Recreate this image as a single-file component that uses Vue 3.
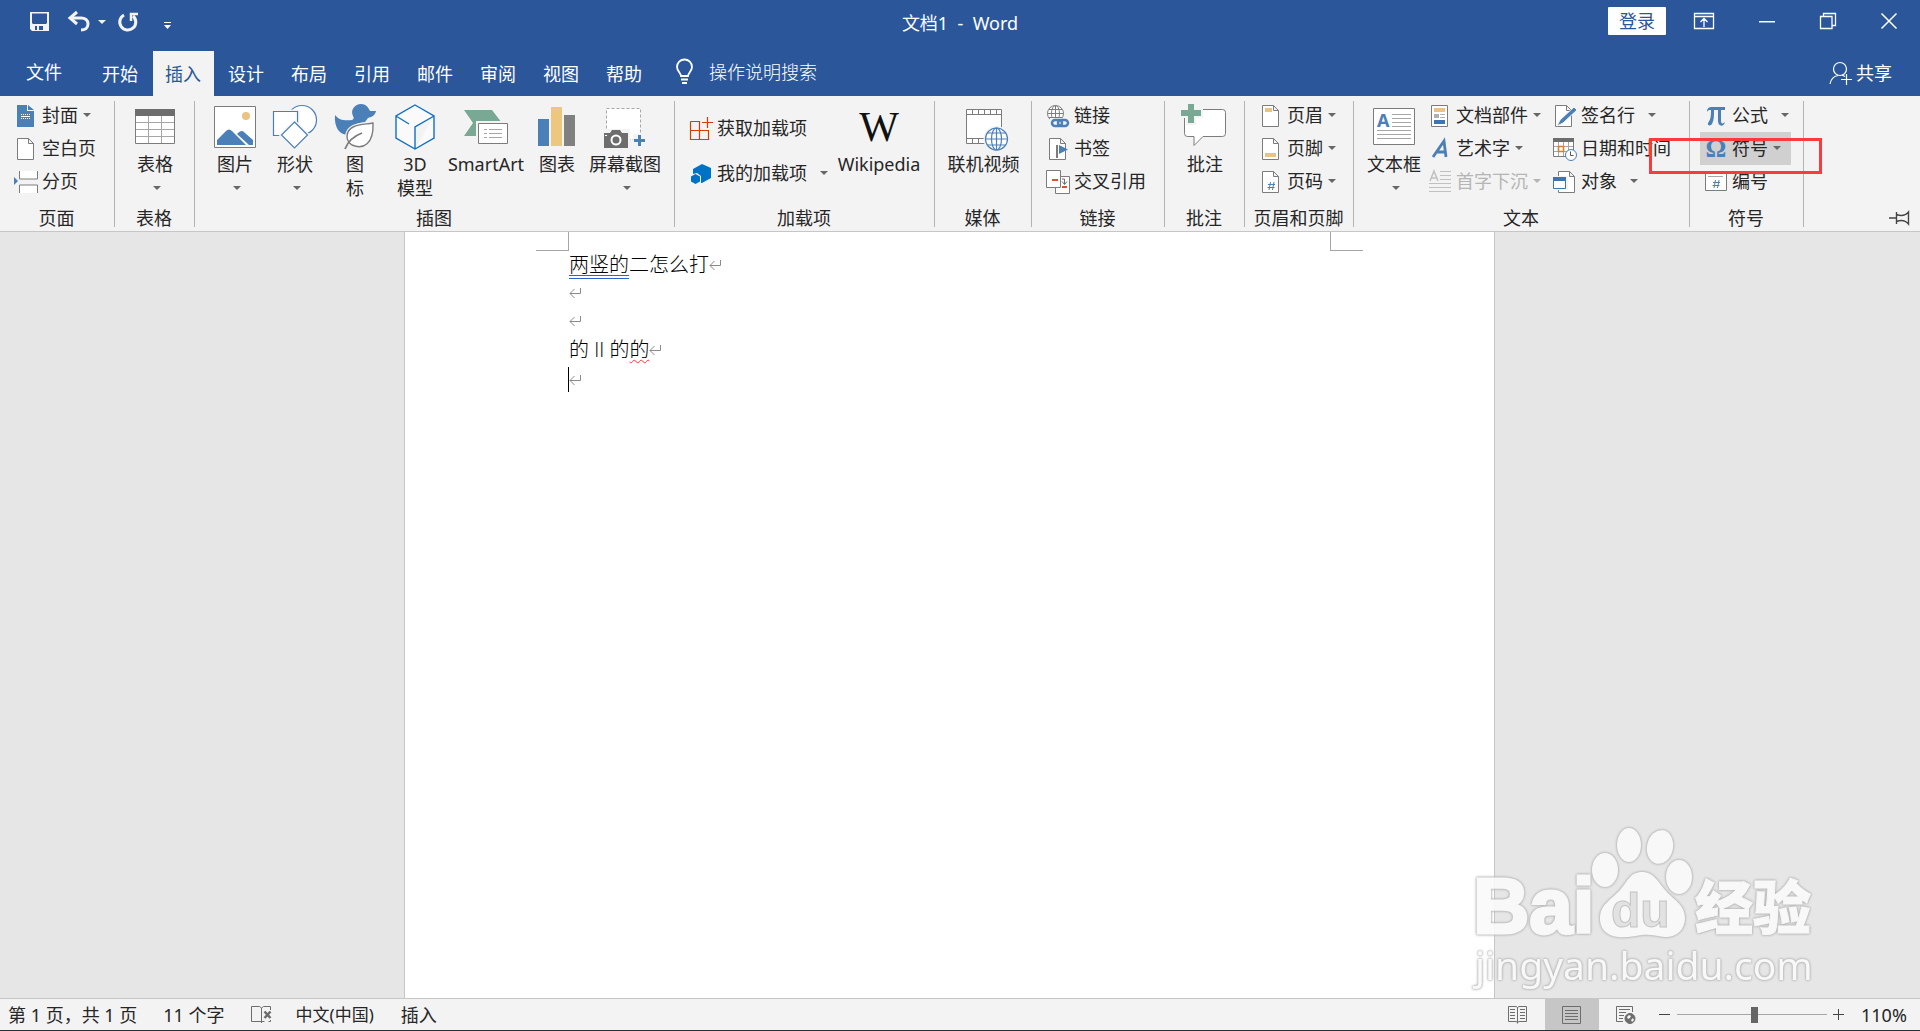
<script setup>
import { ref } from 'vue'

const tabs = ['开始', '插入', '设计', '布局', '引用', '邮件', '审阅', '视图', '帮助']
const activeTab = ref('插入')
const zoom = ref(52)
</script>

<template>
  <div class="word">
    <header class="top">
      <div class="title_bar">
        <div class="quick">
          <button aria-label="保存" class="q_save">
            <svg width="20" height="20" viewBox="0 0 20 20">
              <path fill="#f3f3f3" fill-rule="evenodd" d="M0 0h19v19H2l-2-2zM2 1.500v9.500l1 1h13l1-1v-9.500zM5 14v4h2v-4zM9 14v4h4v-4z" />
            </svg>
          </button>
          <button aria-label="撤消" class="q_undo">
            <svg width="22" height="20" viewBox="0 0 22 20" fill="none" stroke="#f3f3f3" stroke-width="3">
              <path d="M3 6h10c4 0 7 2 7 6s-3 6-7 6" />
              <path d="M9 0L2 6l7 6" />
            </svg>
          </button>
          <i class="caret light"></i>
          <button aria-label="重复" class="q_redo">
            <svg width="20" height="20" viewBox="0 0 20 20" fill="none" stroke="#f3f3f3" stroke-width="3">
              <path d="M6 3a8 8 0 1 0 9 1" />
              <path d="M13 9V2h7" stroke-width="2.500" />
            </svg>
          </button>
          <button aria-label="自定义" class="q_more">
            <svg width="8" height="8" viewBox="0 0 8 8" fill="#fff"><path d="M0 0h7v1H0zM0 3h7L3.500 7z" /></svg>
          </button>
        </div>
        <h1>文档1&nbsp; -&nbsp; Word</h1>
        <div class="window_tools">
          <button class="login">登录</button>
          <button aria-label="功能区显示选项">
            <svg width="20" height="16" viewBox="0 0 20 16" fill="none" stroke="#fff">
              <path d="M.5.5h19v15H.5zM.5 3.500h19M10 14V6M6.500 9L10 5.500 13.500 9" stroke-width="1.300" />
            </svg>
          </button>
          <button aria-label="最小化">
            <svg width="16" height="16" viewBox="0 0 16 16"><path d="M0 8h16v1.500H0z" fill="#fff" /></svg>
          </button>
          <button aria-label="还原">
            <svg width="16" height="16" viewBox="0 0 16 16" fill="none" stroke="#fff" stroke-width="1.300">
              <path d="M.5 3.500h11.500v12H.5zM3.500 3V.5h12v12H12" />
            </svg>
          </button>
          <button aria-label="关闭">
            <svg width="16" height="16" viewBox="0 0 16 16" stroke="#fff" stroke-width="1.500"><path d="M.5.5l15 15M15.500.5l-15 15" /></svg>
          </button>
        </div>
      </div>
      <nav class="tabs">
        <button class="tab file">文件</button>
        <button v-for="tab in tabs" :key="tab" class="tab" :class="{ active: tab === activeTab }" @click="activeTab = tab">
          {{ tab }}
        </button>
        <button class="tell">
          <svg width="20" height="26" viewBox="0 0 20 26" fill="none" stroke="#fff" stroke-width="1.800">
            <path d="M6 17c0-3-4-5-4-9a7.500 7.500 0 0 1 15 0c0 4-4 6-4 9zM6 20.500h7M7 24h5" />
          </svg>
          操作说明搜索
        </button>
        <button class="share">
          <svg width="24" height="24" viewBox="0 0 24 24" fill="none" stroke="#fff" stroke-width="1.200">
            <circle cx="11" cy="8" r="6.500" />
            <path d="M1 23c1-5 4-8 8-8.500M13 14l3 1.500M17.500 13v11M12 18.500h11" />
          </svg>
          共享
        </button>
      </nav>
    </header>

    <section class="ribbon">
      <div class="group g_page">
        <div class="body">
          <div class="rows">
            <button class="small">
              <svg viewBox="0 0 24 24">
                <path d="M3 1h10v6h7v16H3z" fill="#4a7fb8" />
                <path d="M14 1l6 5h-6z" fill="#4a7fb8" />
                <path d="M7 10.500h9M7 14.500h9" stroke="#fff" stroke-dasharray="1 1" />
                <path d="M7 12.500h9" stroke="#fff" />
              </svg>
              封面<i class="caret"></i>
            </button>
            <button class="small">
              <svg viewBox="0 0 24 24"><path class="sheet" d="M3.500 1.500h11l5 5v16h-16zM14.500 1.500v5h5" /></svg>
              空白页
            </button>
            <button class="small">
              <svg viewBox="0 0 24 24">
                <path class="sheet" d="M5.500 1v8h18V1M5.500 23v-8h18v8" />
                <path d="M0 7l4 4-4 4z" fill="#4a7fb8" />
              </svg>
              分页
            </button>
          </div>
        </div>
        <div class="caption">页面</div>
      </div>

      <div class="group g_table">
        <div class="body center">
          <button class="big">
            <svg viewBox="0 0 48 48">
              <path class="sheet" d="M4.500 5.500h39v34h-39z" />
              <path d="M5 18.500h38M5 25.500h38M5 32.500h38M17.500 12v27M30.500 12v27" stroke="#a6a6a6" />
              <path d="M4 5h40v7H4z" fill="#6d6d6d" />
            </svg>
            表格<i class="caret"></i>
          </button>
        </div>
        <div class="caption">表格</div>
      </div>

      <div class="group g_art">
        <div class="body">
          <button class="big">
            <svg viewBox="0 0 48 48">
              <path class="sheet" d="M3.500 2.500h41v41h-41z" />
              <circle cx="35" cy="12" r="4" fill="#eac282" />
              <path d="M6 41v-5l9-9q3-3 6 0l14 14zM27 29q4-4 7 0l8 7v5h-4L26 30z" fill="#4a7fb8" />
            </svg>
            图片<i class="caret"></i>
          </button>
          <button class="big">
            <svg viewBox="0 0 48 48" fill="#fff" stroke="#4a7fb8" stroke-width="1.200">
              <circle cx="31" cy="16" r="14.500" />
              <path d="M2.500 7.500h24v24h-24z" stroke="#f3f3f3" stroke-width="4" />
              <path d="M2.500 7.500h24v24h-24z" />
              <path d="M23.500 18l13 13-13 13-13-13z" stroke="#f3f3f3" stroke-width="4" />
              <path d="M23.500 18l13 13-13 13-13-13z" />
            </svg>
            形状<i class="caret"></i>
          </button>
          <button class="big">
            <svg viewBox="0 0 48 48">
              <path d="M4 11c4 5 9 6 17 5 2-1 2-2 1-4C19 6 24 0 30 0c5 0 7 3 9 7h6c-1 5-5 6-8 7l-3 4c-8 1-17 4-18 13-8-1-13-8-12-20z" fill="#4a7fb8" />
              <path d="M42 19c-11 2-25 1-26 13 0 4 2 7 5 9 11 5 22-1 21-22z" fill="#fff" stroke="#f3f3f3" stroke-width="4" />
              <path d="M42 19c-11 2-25 1-26 13 0 4 2 7 5 9 11 5 22-1 21-22z" fill="#fff" stroke="#7c7c7c" stroke-width="1.400" />
              <path d="M14 45c3-8 9-13 17-16" fill="none" stroke="#7c7c7c" stroke-width="1.800" />
            </svg>
            图<br />标
          </button>
          <button class="big">
            <svg viewBox="0 0 48 48" stroke="#1070c4" stroke-width="1.400" fill="#fafafa">
              <path d="M24 1l19 11v22L24 45 5 34V12zM5 12l13 8M43 12L24 23v22" />
            </svg>
            3D<br />模型
          </button>
          <button class="big smart">
            <svg viewBox="0 0 48 48">
              <path d="M2 6h28l10 13-9 13H2l9-13z" fill="#79a894" />
              <path d="M14 17h34v25H14z" fill="#f3f3f3" />
              <path class="sheet" d="M16.500 19.500h29v20h-29z" />
              <path d="M22 25.500h3m2 0h13M22 29.500h3m2 0h13M22 33.500h3m2 0h13" stroke="#a6a6a6" />
            </svg>
            SmartArt
          </button>
          <button class="big">
            <svg viewBox="0 0 48 48">
              <path d="M5 15h11v27H5z" fill="#4a7fb8" />
              <path d="M18 3h11v39H18z" fill="#eec77f" />
              <path d="M31 11h11v31H31z" fill="#808080" />
            </svg>
            图表
          </button>
          <button class="big shot">
            <svg viewBox="0 0 48 48">
              <path d="M5.500 4.500h34v31h-34z" fill="#fff" stroke="#a6a6a6" stroke-dasharray="3 2" />
              <path d="M2 25h27v20H2z" fill="#f3f3f3" />
              <path d="M3 29h6l2-3h8l2 3h6v15H3z" fill="#6d6d6d" />
              <circle cx="15" cy="36" r="4.500" fill="none" stroke="#fff" stroke-width="2" />
              <path d="M4 31h2v1H4z" fill="#fff" />
              <path d="M32 30h13v13H32z" fill="#f3f3f3" />
              <path d="M33 36.500h11M38.500 31v11" stroke="#4a7fb8" stroke-width="3" />
            </svg>
            屏幕截图<i class="caret"></i>
          </button>
        </div>
        <div class="caption">插图</div>
      </div>

      <div class="group g_addins">
        <div class="body">
          <div class="rows wide">
            <button class="small">
              <svg viewBox="0 0 24 24" fill="none" stroke="#d83b01" stroke-width="1.200">
                <path d="M1.500 4.500h9v18M1.500 4.500v18h18v-9h-18M18.500 0v11M13 5.500h11" />
              </svg>
              获取加载项
            </button>
            <button class="small">
              <svg viewBox="0 0 24 24" fill="#0072c6">
                <path d="M13 2l9 4v10l-9 5h-1v-7l-4-3-4 1V7z" />
                <path d="M6.500 12l4.500 2.500v5L6.500 22 2 19.500v-5z" />
              </svg>
              我的加载项<i class="caret far"></i>
            </button>
          </div>
          <button class="big wiki">
            <svg viewBox="0 0 48 48"><text x="24" y="37" text-anchor="middle" class="serif_w">W</text></svg>
            Wikipedia
          </button>
        </div>
        <div class="caption">加载项</div>
      </div>

      <div class="group g_media">
        <div class="body center">
          <button class="big">
            <svg viewBox="0 0 48 48">
              <path class="sheet" d="M6.500 5.500h35v34h-35z" />
              <path d="M6.500 10.500h35M6.500 34.500h20M12.500 5v5M18.500 5v5M24.500 5v5M30.500 5v5M36.500 5v5M12.500 35v5M18.500 35v5M24.500 35v5" stroke="#7c7c7c" />
              <circle cx="36.500" cy="35" r="13" fill="#f3f3f3" />
              <g fill="#fff" stroke="#4a7fb8" stroke-width="1.200">
                <circle cx="36.500" cy="35" r="11" />
                <ellipse cx="36.500" cy="35" rx="5" ry="11" />
                <path d="M36.500 24v22M25.500 35h22M28 29h17M28 41h17" />
              </g>
            </svg>
            联机视频
          </button>
        </div>
        <div class="caption">媒体</div>
      </div>

      <div class="group g_links">
        <div class="body">
          <div class="rows">
            <button class="small">
              <svg viewBox="0 0 24 24" fill="none">
                <g stroke="#7c7c7c" fill="#fff">
                  <circle cx="9.500" cy="9.500" r="8" />
                  <ellipse cx="9.500" cy="9.500" rx="4" ry="8" />
                  <path d="M9.500 1.500v16M1.500 9.500h16M3 5.500h13M3 13.500h13" />
                </g>
                <path d="M4 14h19v10H4z" fill="#f3f3f3" />
                <g stroke="#4a7fb8" stroke-width="2.500">
                  <rect x="6" y="16" width="10" height="6" rx="3" />
                  <rect x="12" y="16" width="10" height="6" rx="3" />
                </g>
              </svg>
              链接
            </button>
            <button class="small">
              <svg viewBox="0 0 24 24">
                <path class="sheet" d="M3.500 1.500h11l5 5v16h-16zM14.500 1.500v5h5" />
                <path d="M10 8h2v13h-2z" fill="#7c7c7c" />
                <path d="M13 8l9 4.500-9 4.500z" fill="#4a7fb8" />
              </svg>
              书签
            </button>
            <button class="small">
              <svg viewBox="0 0 24 24">
                <path class="sheet" d="M9.500 6.500h14v17h-14z" />
                <path class="sheet" d="M.5.500h14v17H.5z" />
                <path d="M6 10h6M16 17h5" stroke="#d9532c" stroke-width="2" />
                <path d="M16 9h2.500v5M16 11.500l2.500 3 2.500-3" fill="none" stroke="#6d6d6d" />
              </svg>
              交叉引用
            </button>
          </div>
        </div>
        <div class="caption">链接</div>
      </div>

      <div class="group g_note">
        <div class="body center">
          <button class="big">
            <svg viewBox="0 0 48 48">
              <path class="sheet" d="M6.500 5.500h35q3 0 3 3v21q0 3-3 3H22l-9 9v-9H6.500q-3 0-3-3v-21q0-3 3-3z" />
              <path d="M5 0h10v4h7v10h-7v7H5v-7H0V4h5z" fill="#f3f3f3" />
              <path d="M7 0h6v6h7v6h-7v7H7v-7H0V6h7z" fill="#79a894" />
            </svg>
            批注
          </button>
        </div>
        <div class="caption">批注</div>
      </div>

      <div class="group g_head">
        <div class="body">
          <div class="rows">
            <button class="small">
              <svg viewBox="0 0 24 24">
                <path class="sheet" d="M3.500 1.500h11l5 5v16h-16zM14.500 1.500v5h5" />
                <path d="M6 4h7v4H6z" fill="#eac282" />
              </svg>
              页眉<i class="caret"></i>
            </button>
            <button class="small">
              <svg viewBox="0 0 24 24">
                <path class="sheet" d="M3.500 1.500h11l5 5v16h-16zM14.500 1.500v5h5" />
                <path d="M6 16h11v4H6z" fill="#eac282" />
              </svg>
              页脚<i class="caret"></i>
            </button>
            <button class="small">
              <svg viewBox="0 0 24 24">
                <path class="sheet" d="M3.500 1.500h11l5 5v16h-16zM14.500 1.500v5h5" />
                <path d="M10 20l1.500-8M13.500 20l1.500-8M9 14.500h7M8.500 17.500h7" stroke="#4a7fb8" />
              </svg>
              页码<i class="caret"></i>
            </button>
          </div>
        </div>
        <div class="caption">页眉和页脚</div>
      </div>

      <div class="group g_text">
        <div class="body">
          <button class="big">
            <svg viewBox="0 0 48 48">
              <path class="sheet" d="M3.500 4.500h41v36h-41z" />
              <text x="7" y="23" class="letter">A</text>
              <path d="M22 10.500h19M22 14.500h19M22 18.500h19M22 22.500h19M7 26.500h34M7 30.500h34M7 34.500h34" stroke="#a6a6a6" />
            </svg>
            文本框<i class="caret"></i>
          </button>
          <div class="rows">
            <button class="small">
              <svg viewBox="0 0 24 24">
                <path class="sheet" d="M3.500 1.500h16v21h-16z" />
                <path d="M6 4h11v4H6z" fill="#eac282" />
                <path d="M6 10h5v4H6zM12 10h5v1h-5zM12 13h5v1h-5z" fill="#b0b0b0" />
                <path d="M6 16h11v4H6z" fill="#3d75b0" />
              </svg>
              文档部件<i class="caret"></i>
            </button>
            <button class="small">
              <svg viewBox="0 0 24 24">
                <path d="M5 20L16 4l2 16M8 15h9" fill="none" stroke="#4a7fb8" stroke-width="2.800" />
              </svg>
              艺术字<i class="caret"></i>
            </button>
            <button class="small" disabled>
              <svg viewBox="0 0 24 24" stroke="#c0c0c0" fill="none">
                <path d="M2 11L6 1l4 10M3.500 8h5" stroke-width="1.500" />
                <path d="M12 1.500h11M12 5.500h11M12 9.500h11M1 13.500h22M1 17.500h22M1 21.500h22" />
              </svg>
              首字下沉<i class="caret"></i>
            </button>
          </div>
          <div class="rows second">
            <button class="small">
              <svg viewBox="0 0 24 24">
                <path class="sheet" d="M2.500 1.500h11l5 5v16h-16zM13.500 1.500v5h5" />
                <path d="M21 3l3 3L10 19l-6 3 3-6z" fill="#4a7fb8" stroke="#f3f3f3" />
              </svg>
              签名行<i class="caret far"></i>
            </button>
            <button class="small">
              <svg viewBox="0 0 24 24">
                <path class="sheet" d="M.5 1.500h20v18H.5z" />
                <path d="M5.500 5v14M10.500 5v14M15.500 5v14M1 9.500h19M1 14.500h19" stroke="#a6a6a6" />
                <path d="M0 1h21v4H0z" fill="#6d6d6d" />
                <path d="M5.500 9.500h5v5h-5z" fill="#fff" stroke="#e07b28" stroke-width="1.600" />
                <circle cx="18" cy="18" r="5.500" fill="#fff" stroke="#4a7fb8" />
                <path d="M17.500 14.500v4h3" fill="none" stroke="#555" />
              </svg>
              日期和时间
            </button>
            <button class="small">
              <svg viewBox="0 0 24 24">
                <path class="sheet" d="M5.500 1.500h11l5 5v16h-16zM16.500 1.500v5h5" />
                <path d="M-1 6h16v14H-1z" fill="#f3f3f3" />
                <path d="M.5 7.500h12v11H.5z" fill="#fff" stroke="#3d75b0" />
                <path d="M0 7h13v4H0z" fill="#3d75b0" />
              </svg>
              对象<i class="caret far"></i>
            </button>
          </div>
        </div>
        <div class="caption">文本</div>
      </div>

      <div class="group g_symbol">
        <div class="body">
          <div class="rows">
            <button class="small">
              <svg viewBox="0 0 24 24">
                <path d="M3 8c0-4 2-5 5-5h13v3h-4v11c0 3 2 3 4 1-1 5-7 5-7-1V6h-4c0 6 0 10-2 14-1 2-5 2-4-1 3-4 3-8 3-13-2 0-3 0-4 2z" fill="#4a7fb8" />
              </svg>
              公式<i class="caret far"></i>
            </button>
            <button class="small pressed">
              <svg viewBox="0 0 24 24">
                <text x="12" y="20" text-anchor="middle" class="omega">Ω</text>
              </svg>
              符号<i class="caret"></i>
            </button>
            <button class="small">
              <svg viewBox="0 0 24 24">
                <path class="sheet" d="M1.500 2.500h21v18h-21z" />
                <path d="M4 6.500h15" stroke="#a6a6a6" />
                <path d="M10 18l1.500-8M13.500 18l1.500-8M9 12.500h7M8.500 15.500h7" stroke="#4a7fb8" />
              </svg>
              编号
            </button>
          </div>
        </div>
        <div class="caption">符号</div>
        <div class="mark"></div>
      </div>

      <button class="pin" aria-label="固定功能区">
        <svg width="22" height="14" viewBox="0 0 22 14" fill="none" stroke="#444" stroke-width="1.400">
          <path d="M0 7h7M7.500 1v12M7.500 3.500c5 2 9 1 12-2.500v12c-3-3.500-7-4.500-12-2.500" />
        </svg>
      </button>
    </section>

    <main class="workspace">
      <article class="page">
        <i class="corner left"></i>
        <i class="corner right"></i>
        <p><span class="grammar">两竖的</span>二怎么打<svg class="ret" viewBox="0 0 12 12"><path d="M11.500 1v5.500H1M5.500 2L1 6.500 5.500 11" /></svg></p>
        <p><svg class="ret" viewBox="0 0 12 12"><path d="M11.500 1v5.500H1M5.500 2L1 6.500 5.500 11" /></svg></p>
        <p><svg class="ret" viewBox="0 0 12 12"><path d="M11.500 1v5.500H1M5.500 2L1 6.500 5.500 11" /></svg></p>
        <p class="mixed">的 II 的<span class="spelling">的</span><svg class="ret" viewBox="0 0 12 12"><path d="M11.500 1v5.500H1M5.500 2L1 6.500 5.500 11" /></svg></p>
        <p class="current"><svg class="ret" viewBox="0 0 12 12"><path d="M11.500 1v5.500H1M5.500 2L1 6.500 5.500 11" /></svg></p>
      </article>

      <svg class="watermark" width="360" height="176" viewBox="0 0 360 176">
        <text x="9" y="112" class="wm_logo">Bai</text>
        <ellipse cx="141" cy="49" rx="13" ry="17" />
        <ellipse cx="165" cy="24" rx="12" ry="17" />
        <ellipse cx="196" cy="26" rx="13" ry="17" transform="rotate(12 196 26)" />
        <ellipse cx="215" cy="56" rx="13" ry="17" />
        <path d="M178 51c12 0 16 10 24 19s19 14 19 27c0 13-10 20-21 19-8-1-14-3-22-2-9 1-14 3-24 2-12-1-19-9-18-21 1-12 12-17 20-26s10-18 22-18z" />
        <text x="147" y="106" class="wm_du">du</text>
        <text x="231" y="108" class="wm_cn">经验</text>
        <text x="11" y="159" class="wm_url">jingyan.baidu.com</text>
      </svg>
    </main>

    <footer class="status">
      <span class="s_page">第 1 页，共 1 页</span>
      <span class="s_words">11 个字</span>
      <svg class="s_book" width="22" height="18" viewBox="0 0 22 18" fill="none" stroke="#6d6d6d">
        <path d="M10.500 17v-1.500H.5V.5h8l2 1.500 2-1.500h7V4M10.500 2v13.500h3m4 0h2V14" />
        <path d="M13.500 5.500l6 6.500M19.500 5.500l-6 6.500" stroke-width="2.500" />
      </svg>
      <span class="s_lang">中文(中国)</span>
      <span class="s_mode">插入</span>

      <div class="views">
        <button aria-label="阅读视图">
          <svg width="20" height="18" viewBox="0 0 20 18" fill="none" stroke="#6d6d6d">
            <path d="M9.500 1.500L8 .5H.5v15H8l1.500 1 1.500-1h7.500V.5H11zv16" />
            <path d="M2 3.500h5M2 6.500h5M2 9.500h5M2 12.500h5M12 3.500h5M12 6.500h5M12 9.500h5M12 12.500h5" />
          </svg>
        </button>
        <button class="on" aria-label="页面视图">
          <svg width="20" height="18" viewBox="0 0 20 18" fill="none" stroke="#6d6d6d">
            <path d="M.5.500h18v17H.5zM3 4.500h13M3 7.500h13M3 10.500h13M3 13.500h13" />
          </svg>
        </button>
        <button aria-label="Web 版式视图">
          <svg width="20" height="18" viewBox="0 0 20 18" fill="none" stroke="#6d6d6d">
            <path d="M7 15.500H.5V.5h16V6M3 3.500h11M3 6.500h7M3 9.500h5M3 12.500h4" />
            <circle cx="14" cy="12.500" r="5" fill="#6d6d6d" />
            <path d="M11 11l2-2 2 1-1 2-2 1zM15 14l2-2 1 2-2 2z" fill="#f3f3f3" stroke="none" />
          </svg>
        </button>
      </div>
      <button class="step" aria-label="缩小">
        <svg width="12" height="12" viewBox="0 0 12 12"><path d="M0 5.500h11" stroke="#444" /></svg>
      </button>
      <input v-model="zoom" type="range" min="0" max="100" aria-label="显示比例" />
      <button class="step" aria-label="放大">
        <svg width="12" height="12" viewBox="0 0 12 12"><path d="M0 5.500h11M5.500 0v11" stroke="#444" /></svg>
      </button>
      <span class="s_zoom">110%</span>
    </footer>
  </div>
</template>

<style>
body {
  margin: 0;
}
</style>

<style scoped>
.word {
  display: flex;
  flex-direction: column;
  min-height: 100vh;
  font-family: 'Noto Sans', 'Noto Sans CJK SC', sans-serif;
  font-size: 18px;
  line-height: 24px;
  color: #262626;
  background: #e6e6e6;
}

button {
  padding: 0;
  border: none;
  background: none;
  font: inherit;
  color: inherit;
  white-space: nowrap;
}

svg {
  display: block;
  flex: none;
  overflow: visible;
}

.caret {
  width: 0;
  border: 4px solid transparent;
  border-top-color: #666;
  border-bottom: none;
  margin-left: 5px;
}

.caret.far {
  margin-left: 13px;
}

.caret.light {
  border-top-color: #f3f3f3;
}

/* title and tabs */
.top {
  background: #2b579a;
  color: #fff;
}

.title_bar {
  display: grid;
  grid-template-columns: 1fr auto 1fr;
  height: 51px;
}

.quick {
  display: flex;
  align-items: center;
  height: 44px;
  padding-left: 30px;
}

.q_undo {
  margin-left: 18px;
}

.quick .caret {
  margin-left: 8px;
}

.q_redo {
  margin-left: 12px;
}

.q_more {
  margin: 8px 0 0 26px;
}

h1 {
  margin: 0;
  font-size: 18px;
  font-weight: 400;
  line-height: 46px;
}

.window_tools {
  display: flex;
  align-items: center;
  justify-content: flex-end;
  height: 42px;
  gap: 45px;
  padding-right: 23px;
}

.login {
  width: 58px;
  height: 28px;
  margin-right: -17px;
  border-radius: 1px;
  background: #fff;
  color: #2b579a;
}

.tabs {
  display: flex;
  gap: 2px;
  height: 45px;
}

.tab {
  padding: 0 13px 0 12px;
}

.tab.file {
  padding: 0 26px 4px;
}

.tab.active {
  background: #f3f3f3;
  color: #2b579a;
}

.tell {
  display: flex;
  align-items: center;
  gap: 14px;
  margin-left: 18px;
  padding-bottom: 4px;
  font-weight: 300;
}

.share {
  display: flex;
  align-items: center;
  gap: 3px;
  margin-left: auto;
  padding: 0 28px 2px 0;
}

/* ribbon */
.ribbon {
  display: flex;
  height: 135px;
  border-bottom: 1px solid #c6c6c6;
  background: #f3f3f3;
}

.group {
  display: flex;
  flex-direction: column;
  position: relative;
  box-sizing: border-box;
  flex: none;
  padding-top: 3px;
}

.group::after {
  content: '';
  position: absolute;
  right: 0;
  top: 5px;
  bottom: 4px;
  border-right: 1px solid #b4b4b4;
}

.g_page {
  width: 115px;
}
.g_table,
.g_note {
  width: 80px;
}
.g_art {
  width: 480px;
}
.g_addins {
  width: 260px;
}
.g_media {
  width: 97px;
}
.g_links {
  width: 133px;
}
.g_head {
  width: 109px;
}
.g_text {
  width: 336px;
}
.g_symbol {
  width: 114px;
}

.body {
  display: flex;
  flex: 1;
  padding-left: 10px;
}

.body.center {
  justify-content: center;
  padding-left: 0;
}

.caption {
  padding: 0 2px 1px 0;
  text-align: center;
}

.rows {
  display: flex;
  flex-direction: column;
}

.rows.second {
  margin-left: 6px;
}

.small {
  display: flex;
  align-items: center;
  box-sizing: border-box;
  height: 33px;
  padding: 0 2px 2px 4px;
}

.small svg {
  width: 24px;
  height: 24px;
  margin: 2px 4px 0 0;
}

.rows.wide {
  padding-top: 7px;
}

.rows.wide .small {
  height: 45px;
}

.small:disabled {
  color: #b5b5b5;
}

.small:disabled .caret {
  border-top-color: #b5b5b5;
}

.small.pressed {
  background: #d0d0d0;
}

.big {
  display: flex;
  flex-direction: column;
  align-items: center;
  min-width: 60px;
  height: 106px;
  padding-top: 5px;
}

.big svg {
  width: 48px;
  height: 48px;
}

.big .caret {
  margin: 10px 0 0 4px;
}

.big.smart {
  width: 82px;
}

.big.shot {
  width: 76px;
}

.big.wiki {
  width: 98px;
}

.sheet {
  fill: #fff;
  stroke: #7c7c7c;
}

.serif_w {
  font-family: 'Liberation Serif', serif;
  font-size: 42px;
  fill: #111;
}

.letter {
  font-size: 18px;
  font-weight: 700;
  fill: #4a7fb8;
}

.omega {
  font-family: 'Liberation Serif', serif;
  font-size: 26px;
  font-weight: 700;
  fill: #4a7fb8;
}

.mark {
  position: absolute;
  top: 42px;
  left: -41px;
  width: 167px;
  height: 30px;
  border: 3px solid #fb3b3b;
  z-index: 1;
}

.pin {
  align-self: flex-end;
  margin-left: auto;
  padding: 0 9px 6px 0;
}

/* document */
.workspace {
  display: flex;
  flex: 1;
  justify-content: center;
  position: relative;
  padding-right: 21px;
}

.page {
  position: relative;
  box-sizing: border-box;
  width: 1091px;
  padding: 19px 164px;
  border: 1px solid #c6c6c6;
  border-width: 0 1px;
  background: #fff;
  font-family: 'Open Sans', 'Noto Sans CJK SC', sans-serif;
  font-size: 20px;
  font-weight: 300;
  line-height: 28px;
  color: #000;
}

.corner {
  position: absolute;
  top: 0;
  width: 32px;
  height: 18px;
  border-bottom: 1px solid #a6a6a6;
}

.corner.left {
  left: 131px;
  border-right: 1px solid #a6a6a6;
}

.corner.right {
  right: 131px;
  border-left: 1px solid #a6a6a6;
}

.page p {
  display: flex;
  align-items: center;
  height: 28px;
  margin: 0;
  white-space: pre;
}

.page .mixed {
  height: 30px;
}

.ret {
  width: 12px;
  height: 12px;
  fill: none;
  stroke: #8a8a8a;
}

.grammar {
  height: 20px;
  margin-top: 4px;
  line-height: 20px;
  border-bottom: 4px double #2a62d0;
}

.spelling {
  text-decoration: underline wavy #f33 1px;
  text-underline-offset: 2px;
}

.page .current {
  height: 25px;
  margin-top: 2px;
  margin-left: -1px;
  border-left: 1px solid #000;
}

.watermark {
  position: absolute;
  right: 96px;
  bottom: 1px;
  fill: #fafafa;
  opacity: 0.9;
  filter: drop-shadow(0 0 1px #aaa) drop-shadow(0 0 1px #bbb);
}

.wm_logo {
  font-family: 'Liberation Sans', sans-serif;
  font-size: 78px;
  font-weight: 700;
  stroke: #fafafa;
  stroke-width: 3px;
}

.wm_du {
  font-family: 'Liberation Sans', sans-serif;
  font-size: 48px;
  font-weight: 700;
  fill: #e2e2e2;
  stroke: #c0c0c0;
}

.wm_cn {
  font-family: 'Noto Sans CJK SC', sans-serif;
  font-size: 58px;
  font-weight: 900;
  stroke: #fafafa;
}

.wm_url {
  font-size: 39px;
}

/* status bar */
.status {
  display: flex;
  align-items: center;
  height: 31px;
  border-top: 1px solid #c6c6c6;
  border-bottom: 1px solid #1c323c;
  background: #f3f3f3;
}

.s_page {
  margin-left: 8px;
}

.s_words {
  margin-left: 26px;
}

.s_book {
  margin-left: 26px;
}

.s_lang {
  margin-left: 23px;
  font-size: 17px;
}

.s_mode {
  margin-left: 27px;
}

.views {
  display: flex;
  align-self: stretch;
  margin-left: auto;
}

.views button {
  display: flex;
  align-items: center;
  justify-content: center;
  width: 54px;
}

.views .on {
  background: #c6c6c6;
}

.step {
  margin: 0 6px;
}

input[type='range'] {
  appearance: none;
  width: 150px;
  height: 16px;
  margin: 0;
  background: linear-gradient(#a6a6a6, #a6a6a6) center / 100% 1px no-repeat;
}

input[type='range']::-webkit-slider-thumb {
  appearance: none;
  width: 7px;
  height: 16px;
  background: #666;
}

.s_zoom {
  width: 48px;
  margin: 0 11px 0 10px;
}
</style>
